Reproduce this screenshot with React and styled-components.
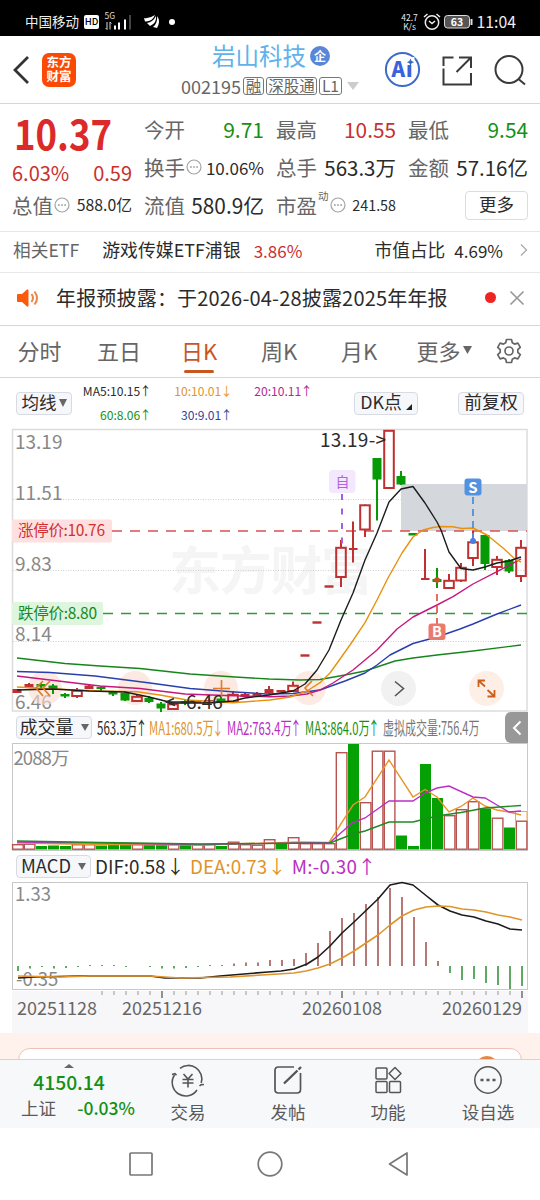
import React from 'react';
import styled, { createGlobalStyle } from 'styled-components';

const RED = '#c93030';
const GREEN = '#149114';
const ORANGE = '#e0942a';
const PURPLE = '#b92fc4';
const BLUE = '#2f459c';
const DARK = '#2b2b2b';

const GlobalStyle = createGlobalStyle`
  * { box-sizing: border-box; }
  body {
    margin: 0;
    background: #fff;
    color: ${DARK};
    font-family: "Noto Sans CJK SC", "Noto Sans", sans-serif;
    line-height: 1;
    white-space: nowrap;
  }
  svg { display: block; flex: none; overflow: visible; }
`;

const Screen = styled.div`
  width: 540px;
  height: 1200px;
  overflow: hidden;
  display: flex;
  flex-direction: column;
`;

const Text = styled.span`
  flex: none;
  font-size: ${p => p.$size || 18}px;
  color: ${p => p.$color || DARK};
  font-weight: ${p => p.$weight || 400};
  letter-spacing: ${p => p.$ls || 0}px;
  margin-left: ${p => p.$ml || 0}px;
`;

/* status bar */
const StatusBar = styled.div`
  height: 36px;
  flex: none;
  background: #000;
  display: flex;
  align-items: center;
  padding: 7px 24px 0 25px;
`;
const HdBox = styled.span`
  width: 15px;
  height: 14px;
  margin-left: 5px;
  border-radius: 2px;
  background: #fff;
  color: #000;
  font-size: 9.5px;
  font-weight: 500;
  display: flex;
  align-items: center;
  justify-content: center;
`;
const Spacer = styled.span`
  flex: 1;
`;
const Speed = styled.span`
  width: 18px;
  display: flex;
  flex-direction: column;
  align-items: center;
  gap: 1px;
  color: #e8e8e8;
  font-size: 8.5px;
  margin-right: 4px;
`;

/* header */
const Header = styled.div`
  height: 68px;
  flex: none;
  border-bottom: 1px solid #d6d6d6;
  display: flex;
  align-items: center;
  padding-left: 12px;
`;
const Logo = styled.div`
  width: 34px;
  height: 34px;
  margin-left: 12px;
  border-radius: 7px;
  background: #fb4a05;
  color: #fff;
  font-size: 12.5px;
  font-weight: 700;
  line-height: 14px;
  text-align: center;
  padding-top: 2px;
`;
const Titles = styled.div`
  width: 178px;
  height: 67px;
  margin: 0 25px 0 105px;
  display: flex;
  flex-direction: column;
`;
const TitleRow = styled.div`
  display: flex;
  align-items: center;
  height: 25px;
  margin-top: 7px;
  padding-left: 31px;
`;
const Badge = styled.span`
  width: 20px;
  height: 20px;
  margin-left: 4px;
  border-radius: 50%;
  background: #5a86d8;
  color: #fff;
  font-size: 12px;
  font-weight: 700;
  display: flex;
  align-items: center;
  justify-content: center;
`;
const CodeRow = styled.div`
  display: flex;
  align-items: center;
  height: 20px;
  margin-top: 8px;
`;
const Tag = styled.span`
  height: 18px;
  width: ${p => p.$w}px;
  margin-left: 2px;
  border: 1px solid #777;
  border-radius: 3px;
  color: #666;
  font-size: 15.5px;
  display: flex;
  align-items: center;
  justify-content: center;
  padding-bottom: 1px;
`;

/* quote */
const Quote = styled.div`
  height: 128px;
  flex: none;
  border-bottom: 1px solid #e6e6e6;
  display: grid;
  grid-template-columns: repeat(4, 120px);
  column-gap: 12px;
  padding: 6px 0 0 12px;
  align-content: start;
`;
const QuoteCol = styled.div`
  display: flex;
  flex-direction: column;
`;
const Cell = styled.div`
  height: ${p => p.$h || 38}px;
  display: flex;
  align-items: center;
  justify-content: space-between;
`;
const Group = styled.span`
  display: flex;
  align-items: center;
  gap: 1px;
`;
const Sup = styled.sup`
  font-size: 10.5px;
  color: #666;
  align-self: flex-start;
  margin-top: -4px;
`;
const Price = styled.div`
  height: 49px;
  display: flex;
  align-items: center;
  padding: 0 0 5px 2px;
  font-size: 42px;
  font-weight: 700;
  color: #dc2a2a;

  span {
    transform: scaleX(0.87);
    transform-origin: left;
  }
`;
const MoreButton = styled.button`
  width: 63px;
  height: 29px;
  margin: 5px 0 0 57px;
  padding: 0 0 3px;
  border: 1px solid #dcdcdc;
  border-radius: 4px;
  background: #fff;
  color: ${DARK};
  font: 400 17.5px "Noto Sans CJK SC", sans-serif;
  line-height: 1;
`;

const EtfRow = styled.div`
  height: 41px;
  flex: none;
  border-bottom: 1px solid #e8e8e8;
  display: flex;
  align-items: center;
  padding: 0 12px 4px 13px;
`;
const NoticeRow = styled.div`
  height: 53px;
  flex: none;
  border-bottom: 1px solid #d6d6d6;
  display: flex;
  align-items: center;
  padding: 0 15px 3px 16px;
`;
const Dot = styled.span`
  width: ${p => p.$s}px;
  height: ${p => p.$s}px;
  border-radius: 50%;
  background: ${p => p.$c};
`;

/* period tabs */
const Tabs = styled.div`
  height: 52px;
  flex: none;
  border-bottom: 1px solid #d6d6d6;
  display: flex;
`;
const Tab = styled.div`
  width: ${p => p.$w || 80}px;
  height: 51px;
  padding-bottom: ${p => (p.$icon ? 1 : 4)}px;
  position: relative;
  display: flex;
  align-items: center;
  justify-content: center;
  gap: 2px;
  font-size: 22px;
  color: ${p => (p.$active ? '#c8571f' : '#666')};

  &::after {
    content: '';
    display: ${p => (p.$active ? 'block' : 'none')};
    position: absolute;
    bottom: 4px;
    left: 25px;
    width: 30px;
    height: 3px;
    border-radius: 2px;
    background: #c8571f;
  }
`;

/* indicator bars */
const IndicatorBar = styled.div`
  height: ${p => p.$h}px;
  flex: none;
  padding: ${p => p.$pad || '0 12px 0 16px'};
  display: flex;
  align-items: center;
`;
const Pick = styled.div`
  width: ${p => p.$w}px;
  height: 23px;
  flex: none;
  padding-bottom: 3px;
  border: 1px solid #d9dbe2;
  border-radius: 4px;
  background: #f6f7fa;
  display: flex;
  align-items: center;
  justify-content: center;
  gap: ${p => p.$gap || 2}px;
  font-size: 17.8px;

  svg {
    position: relative;
    top: 1px;
  }
`;
const Legend = styled.div`
  width: 239px;
  display: grid;
  grid-template-columns: 78px 81px 80px;
  grid-template-rows: 24px 24px;
  align-items: center;
  justify-items: end;
  font-size: 12.1px;
`;
const LegendItem = styled.span`
  color: ${p => p.$c};
  display: flex;
  align-items: center;
`;
const Arrow = styled.span`
  width: 0.72em;
  display: inline-flex;
  justify-content: center;
  margin-left: ${p => p.$ml || 0}px;
`;
const SlimBox = styled.span`
  width: ${p => p.$w}px;
  flex: none;
  margin-left: ${p => p.$ml}px;
`;
const Slim = styled.span`
  display: inline-flex;
  align-items: center;
  font-size: 18px;
  color: ${p => p.$c};
  transform: translateY(-1px) scaleX(${p => p.$k});
  transform-origin: left;
`;
const Collapse = styled.div`
  width: 23px;
  height: 31px;
  border-radius: 6px 0 0 6px;
  background: #989898;
  display: flex;
  align-items: center;
  justify-content: center;
  margin-left: auto;
`;
const ChartBox = styled.div`
  flex: none;
  height: ${p => p.$h}px;
  padding-left: 12px;
`;

/* bottom */
const Promo = styled.div`
  height: 26px;
  flex: none;
  background: #fff2ed;
  padding: 15px 18px 0;
  overflow: hidden;
`;
const PromoCard = styled.div`
  height: 40px;
  border: 1px solid #eec2b9;
  border-radius: 12px;
  background: #fff;
  padding: 7px 22px 0 0;
  display: flex;
  justify-content: flex-end;
`;
const BottomBar = styled.div`
  height: 69px;
  flex: none;
  border-top: 1px solid #d2d4d6;
  background: #f6f8fa;
  display: flex;
`;
const IndexBox = styled.div`
  width: 138px;
  display: flex;
  flex-direction: column;
  align-items: center;
  padding-top: 4px;
`;
const IndexValue = styled.div`
  margin-top: 5px;
  font-size: 19.3px;
  font-weight: 500;
  color: ${GREEN};
`;
const IndexRow = styled.div`
  width: 138px;
  height: 20px;
  margin-top: 5px;
  padding: 0 3px 0 21px;
  display: flex;
  align-items: center;
  justify-content: space-between;
`;
const Action = styled.div`
  width: 100px;
  display: flex;
  flex-direction: column;
  align-items: center;
  padding-top: 4px;
  gap: 7px;
  font-size: 17.5px;
  color: #5a5a5a;
`;
const NavBar = styled.div`
  height: 72px;
  flex: none;
  display: flex;
  align-items: center;
  justify-content: center;
  gap: 103px;
  padding-right: 1px;
`;

const Info = () => (
  <svg width="16" height="16" viewBox="0 0 16 16" fill="none" stroke="#a3a3a3">
    <circle cx="8" cy="8" r="7" strokeWidth="1.2" />
    <path d="M4 8h1.8M7.1 8h1.8M10.2 8H12" strokeWidth="1.6" />
  </svg>
);
const Caret = ({ w = 8, h = 7, c = '#666' }) => (
  <svg width={w} height={h} viewBox="0 0 10 10" preserveAspectRatio="none">
    <path d="M0 0h10L5 10z" fill={c} />
  </svg>
);

const xAt = i => 17 + 12 * i;

// [kind, high, body top, body bottom, low]; h = hollow red, g = green
const candles = [
  ['r', 689, 689, 693, 693], ['r', 683, 684, 688, 688], ['g', 683, 684, 686.5, 689],
  ['g', 684, 685.5, 690, 694], ['g', 693, 694, 696.5, 698], ['h', 688, 690, 696, 698],
  ['r', 684, 685.5, 689, 689], ['g', 686, 687, 689, 691], ['g', 691, 692, 694.5, 696],
  ['g', 692, 693, 700.5, 701], ['h', 695, 696, 701, 702], ['g', 696, 698, 702, 703],
  ['g', 702, 703.5, 708.5, 712], ['h', 702, 703.5, 709, 710], ['g', 700, 701, 703.5, 705],
  ['r', 700, 700, 703, 703], ['r', 699, 700, 703, 703], ['g', 697, 698.5, 701, 703],
  ['h', 691, 694, 702, 703], ['r', 693, 694, 697, 697], ['r', 692, 693.5, 696.5, 697],
  ['r', 686, 689, 693, 694], ['r', 690, 690, 692.5, 692], ['h', 681.5, 685, 691, 692],
  ['d', 0, 655.5], ['d', 0, 622.5], ['d', 0, 586.5],
  ['h', 540, 547, 577, 587], ['x', 521.5, 549, 549, 562.5], ['h', 504, 504.5, 529.5, 537],
  ['g', 458, 458, 479.5, 520.5], ['h', 430, 430, 488, 488], ['g', 471, 476, 484.5, 485],
  ['g', 533, 533, 535.5, 535], ['x', 549, 579, 579, 579], ['g', 568, 579, 582, 588],
  ['h', 574, 580, 588, 589], ['h', 563, 567, 580.5, 582], ['h', 531, 541.5, 558, 566],
  ['g', 535, 535, 564, 570], ['h', 556, 559, 567, 575], ['g', 559, 560, 571.5, 573],
  ['h', 540, 547, 576, 582],
];

const maLines = [
  ['#16861a', '17,658 65,663.5 100,666 140,668.5 190,674 235,677 269,679 300,680 320,679.5 345,675 365,671 377,667 395,661 413,658 437,655 473,651 521,645'],
  ['#2a3fae', '17,671.5 50,672.5 95,676 150,683 190,688.5 235,692 267,694 293,693.5 320,690 345,681 365,673 377,665 390,655 413,643.5 437,637 460,629 473,624 497,614 521,605'],
  ['#c4187e', '17,676 50,680 100,686 140,688.5 160,691 185,694 225,695.5 270,696.7 290,696 307,694 320,690 333,683 353,670 377,650 397,629 413,617 437,605 453,596.7 473,584 497,571.7 521,559'],
  ['#e8920f', '17,687 53,689 100,691 137,691.7 160,695 187,700 233,702.7 270,700 290,697 307,691 320,682.7 330,673 350,645 365,622.7 377,600 388,578 402,553 413,537 423,530 433,527.5 440,526.5 453,526.7 462,528.5 473,528 487,535 503,548 515,559 521,562'],
  ['#1c1c1c', '17,690 53,689 89,691 125,692 149,697 173,703 209,703 233,701 245,698 269,695 281,693 293,691 305,684 317,670 329,650 341,620 353,593 365,560 377,533 389,502 401,489 413,486.5 425,503 437,522 441,530 449,552 461,568.5 473,570 485,567 497,563 509,561 521,557'],
];

const Candle = ({ x, d }) => {
  const [kind, hi, top, bottom, lo] = d;
  const c = kind === 'g' ? '#079a07' : '#c03030';
  if (kind === 'd') return <rect x={x - 4.5} y={top - 1.2} width="9" height="2.4" fill={c} />;
  if (kind === 'x') {
    return <path d={`M${x} ${hi}V${lo}M${x - 4} ${top}h8.5`} stroke={c} strokeWidth="2" fill="none" />;
  }
  if (kind === 'h') {
    return (
      <g stroke={c} strokeWidth="2" fill="none">
        <path d={`M${x} ${hi}V${top}M${x} ${bottom}V${lo}`} />
        <rect x={x - 4.8} y={top + 0.8} width="9.6" height={bottom - top - 0.8} />
      </g>
    );
  }
  return (
    <g fill={c}>
      <rect x={x - 1} y={hi} width="2" height={lo - hi} />
      <rect x={x - 4.5} y={top} width="9" height={bottom - top} />
    </g>
  );
};

const PriceChart = () => (
  <svg width="516" height="284" viewBox="12 428 516 284">
    <text x="169" y="590" fontSize="52" fontWeight="700" fill="#f5f5f5" textLength="204">东方财富</text>
    <rect x="12.5" y="429.5" width="514.5" height="281.5" fill="none" stroke="#dcdcdc" strokeWidth="1.5" />
    <path d="M13 499.5H527M13 570.5H527M13 641.5H527" stroke="#cfcfcf" strokeDasharray="1 1.5" />
    <g fontSize="19" fill="#888">
      <text x="15" y="449">13.19</text>
      <text x="15" y="500">11.51</text>
      <text x="15" y="571">9.83</text>
      <text x="15" y="641">8.14</text>
      <text x="15" y="708.5">6.46</text>
    </g>
    <rect x="401" y="484" width="126" height="47" fill="#d4d8dd" />
    <g fill="#fbdcd0" opacity="0.6">
      <circle cx="45" cy="688" r="17" />
      <circle cx="135" cy="688" r="17" />
      <circle cx="221" cy="688" r="17" />
      <circle cx="309" cy="688" r="17" />
    </g>
    <circle cx="398.5" cy="688.5" r="17.5" fill="#f1f1f1" />
    <circle cx="486.5" cy="688.5" r="17.5" fill="#feefe6" />
    <path d="M112 531H527" stroke="#dc5050" strokeWidth="1.4" strokeDasharray="10 8" />
    <path d="M103 613.5H527" stroke="#2f9a3c" strokeWidth="1.4" strokeDasharray="10 8" />
    <rect x="12" y="519.5" width="100" height="23" rx="2" fill="#fee0e0" />
    <rect x="12" y="602" width="91" height="23" rx="2" fill="#def5de" />
    <text x="18" y="536" fontSize="15.5" fill="#d03030" textLength="87">涨停价:10.76</text>
    <text x="18" y="619" fontSize="15.5" fill="#188a24" textLength="79">跌停价:8.80</text>

    {candles.map((d, i) => <Candle key={i} x={xAt(i)} d={d} />)}
    {maLines.map(([c, pts]) => (
      <polyline key={c} points={pts} fill="none" stroke={c} strokeWidth="1.4" strokeLinejoin="round" />
    ))}

    <path d="M342 494V548" stroke="#a062dc" strokeWidth="2" strokeDasharray="6 8.5" />
    <rect x="329" y="470" width="26.5" height="23" rx="4" fill="#f3e8fd" />
    <text x="342.5" y="486.8" fontSize="14" fill="#b065dc" textAnchor="middle">自</text>
    <path d="M473 497V540" stroke="#4f8fe0" strokeWidth="1.8" strokeDasharray="7 5" />
    <circle cx="473" cy="541" r="3" fill="#4a7fe0" />
    <rect x="464.5" y="478.5" width="17" height="17" rx="3" fill="#5292e0" />
    <text x="473" y="492.5" fontSize="15" fontWeight="700" fill="#fff" textAnchor="middle">S</text>
    <path d="M437 594V624" stroke="#e2604e" strokeWidth="1.8" strokeDasharray="7 5" />
    <circle cx="437" cy="580" r="2.8" fill="#c5521a" />
    <rect x="428.5" y="623.5" width="17" height="16.5" rx="3" fill="#ea7b6c" />
    <text x="437" y="637" fontSize="14.5" fontWeight="700" fill="#fff" textAnchor="middle">B</text>

    <text x="320" y="447" fontSize="19" fill={DARK} textLength="66">13.19-&gt;</text>
    <text x="186" y="708.5" fontSize="19" fill={DARK}>6.46</text>
    <path d="M174 698.5l-8 3.5 9 3.5M167 702h27" stroke={DARK} strokeWidth="1.4" fill="none" />

    <g fill="none" stroke="#e07a28" strokeWidth="1.6">
      <path d="M43 681l-7 7 7 8M50 681l-7 7 7 8" />
      <path d="M221.5 680V697M213 688.5H230" />
      <path d="M312 681l-7 7 8 8" />
    </g>
    <path d="M395 681.5l8.5 7-8.5 7.5" fill="none" stroke="#555" strokeWidth="1.6" />
    <path d="M478.5 687v-6.5h6.5M479 681l6 5.5M487.5 696.5h7v-6.5M494 696l-6.500-6" fill="none" stroke="#cc5f1c" strokeWidth="1.8" />
  </svg>
);

const volumes = [
  ['r', 844.5], ['r', 844], ['g', 846], ['g', 845.5], ['g', 846], ['r', 844.5], ['r', 844.5],
  ['g', 845.5], ['g', 845], ['g', 845], ['r', 844.5], ['g', 845], ['g', 845], ['r', 844.5],
  ['g', 845], ['r', 844.5], ['r', 844.5], ['g', 846], ['r', 842], ['r', 844.5], ['r', 845],
  ['r', 839.5], ['g', 843], ['r', 837.5], ['r', 843.5], ['r', 843.5], ['r', 843.5],
  ['r', 752.5], ['g', 744], ['r', 802.5], ['r', 751], ['r', 751], ['g', 835.5], ['g', 846],
  ['g', 764], ['g', 798], ['r', 815.5], ['r', 809.5], ['r', 801.5], ['g', 808.5],
  ['r', 818], ['g', 827.5], ['r', 821],
];

const VolumeChart = () => (
  <svg width="516" height="108" viewBox="12 743 516 108">
    <rect x="12.5" y="743.5" width="515" height="107" fill="none" stroke="#c8c8c8" />
    {volumes.map(([k, top], i) => (k === 'g'
      ? <rect key={i} x={xAt(i) - 5} y={top} width="11" height={849.5 - top} fill="#04a004" />
      : <rect key={i} x={Math.max(xAt(i) - 4.7, 12.6)} y={top + 0.2} width="10.6" height={849 - top} fill="#fff" stroke="#b85450" strokeWidth="1.4" />
    ))}
    <path d="M515.500 821V811.500H527V821" fill="none" stroke="#eda45c" />
    <text x="13.500" y="765" fontSize="18.5" fill="#888" textLength="56">2088万</text>
    <g fill="none" strokeWidth="1.4">
      <polyline stroke="#e8952a" points="17,843 100,844.5 200,845 300,842 329,842.5 353,805 365,797 389,760 413,797 425,789.5 437,797 449,812 461,806.5 473,798 485,806 497,810 509,812 521,815" />
      <polyline stroke={PURPLE} points="17,842 100,843 200,844.5 330,842.5 352,823 365,818 389,801 413,801 425,793 437,788 449,786 473,797 485,798 497,805 509,812 521,811" />
      <polyline stroke="#1f8a22" points="17,841 100,842.500 200,844 330,843 353,834 365,831 389,822 413,822 437,816 461,812.5 485,808 521,805.5" />
    </g>
  </svg>
);

const macd = [
  971, 968.5, 967, 968.5, 968, 967, 965, 965, 965, 967, 966, 967, 968.5, 968.5, 968, 967, 965, 965,
  963.5, 962.5, 962.5, 960, 960, 959, 953, 943, 931, 918, 913, 904, 897, 888, 897, 917, 942,
  961, 973, 980, 979, 983, 985, 989, 986,
];

const MacdChart = () => (
  <svg width="516" height="109" viewBox="12 882 516 109">
    <rect x="12.5" y="882.5" width="515" height="107" fill="none" stroke="#c8c8c8" />
    {macd.map((y, i) => (
      <path key={i} d={`M${18 + 12 * i} 966V${y}`} stroke={y > 966 ? '#449a48' : '#a8615e'} strokeWidth="1.7" />
    ))}
    <g fontSize="18.5" fill="#888">
      <text x="15" y="900.5">1.33</text>
      <text x="16" y="985.5">-0.35</text>
    </g>
    <g fill="none" strokeWidth="1.6" strokeLinejoin="round">
      <polyline stroke="#1c1c1c" points="18,978 35,977 80,976 150,976 165,978 200,978 220,976 268,972 281,971 294,969 307,964 318,957 330,946 342,933 354,922 366,910.5 378,899 390,885 402,882.5 413,885 426,895.5 438,905 450,911 462,915 474,917 486,921 498,924 510,929 522,930" />
      <polyline stroke={ORANGE} points="18,976 60,977 90,976 150,976 180,978 230,977 270,974.5 294,973 306,971 318,968 330,964 342,958 354,951 366,943 378,935 390,925 402,916 414,910 426,907 438,906 450,906.5 462,909 474,910 486,912 498,915 510,917 522,920" />
    </g>
  </svg>
);

const DateAxis = () => (
  <svg width="516" height="42" viewBox="12 991 516 42">
    <rect x="12" y="991" width="516" height="42" fill="#f7f7fa" />
    {Array.from({ length: 36 }, (_, i) => 102 + 12 * i).map(x => {
      const major = [162, 342, 522].includes(x);
      return <path key={x} d={`M${x} 991V${major ? 998 : 995}`} stroke={major ? '#777' : '#bbb'} strokeWidth="1.6" />;
    })}
    <g fontSize="18" fill="#666">
      <text x="17" y="1015">20251128</text>
      <text x="122" y="1015">20251216</text>
      <text x="302" y="1015">20260108</text>
      <text x="442" y="1015">20260129</text>
    </g>
  </svg>
);

const App = () => {
  return (
    <Screen>
      <GlobalStyle />
      <StatusBar>
        <Text $size={13.5} $color="#eee">中国移动</Text>
        <HdBox>HD</HdBox>
        <svg width="38" height="20" viewBox="0 0 38 20">
          <text x="5.500" y="7" fontSize="8.500" fill="#ddd">5G</text>
          <path d="M8 10v7.500l-1.500-1.500M11 17.500V10l1.500 1.500" stroke="#ddd" fill="none" />
          <path d="M16 17.500v-4M20 17.500v-7M26 17.500v-10" stroke="#fff" strokeWidth="2" />
          <path d="M31 17.500V3" stroke="#444" strokeWidth="2" />
        </svg>
        <svg width="44" height="16" viewBox="0 0 44 16" fill="#fff">
          <path d="M7 4q5 1 11-3-3 7-10 6.500zM10 9q6-1 9-7 1 7-6 10-1-1-3-3zM16 13q5-4 4-11 4 5 0 12z" />
          <circle cx="35" cy="8" r="3" />
        </svg>
        <Spacer />
        <Speed><span>42.7</span><span>K/s</span></Speed>
        <svg width="18" height="18" viewBox="0 0 18 18" fill="none" stroke="#eee" strokeWidth="1.5">
          <circle cx="9" cy="9.500" r="6.700" />
          <path d="M1 4l3.500-3M17 4l-3.500-3M6 8l3 2.500L12 8" />
        </svg>
        <svg width="33" height="16" viewBox="0 0 33 16">
          <rect x="3.500" y="1.500" width="25" height="12.500" rx="3" fill="#555" stroke="#ddd" />
          <path d="M30.500 5v6" stroke="#ddd" strokeWidth="2" />
          <text x="16" y="11.800" fontSize="10.500" fontWeight="700" fill="#fff" textAnchor="middle">63</text>
        </svg>
        <Text $size={15.8} $color="#eee" $ml={3}>11:04</Text>
      </StatusBar>

      <Header>
        <svg width="18" height="30" viewBox="0 0 18 30" fill="none" stroke="#333" strokeWidth="2.800">
          <path d="M16 2L3 15l13 13" />
        </svg>
        <Logo>东方<br />财富</Logo>
        <Titles>
          <TitleRow>
            <Text $size={23.5} $color="#5fb2ea">岩山科技</Text>
            <Badge>企</Badge>
          </TitleRow>
          <CodeRow>
            <Text $size={18} $color="#666">002195</Text>
            <Tag $w={21}>融</Tag>
            <Tag $w={51}>深股通</Tag>
            <Tag $w={23}>L1</Tag>
            <Text $ml={5}><Caret w={12} h={8} c="#ccc" /></Text>
          </CodeRow>
        </Titles>
        <svg width="37" height="37" viewBox="0 0 37 37">
          <circle cx="18.500" cy="18.500" r="16.600" fill="#fff" stroke="#3c6cc8" strokeWidth="2" />
          <text x="7.500" y="26" fontSize="20.500" fontWeight="900" fill="#3a62dc" textLength="21">Ai</text>
          <path d="M22.500 6h8v8h-8z" fill="#fff" />
          <path d="M26.500 7.500l1.100 2.600 2.600 1.100-2.600 1.100-1.100 2.600-1.100-2.600-2.600-1.100 2.600-1.100z" fill="#3466c4" />
        </svg>
        <svg width="52" height="36" viewBox="0 0 52 36" fill="none" stroke="#3a3a3a" strokeWidth="2">
          <path d="M32.500 5.500H22.500V14M22.500 16.500V32.500H50V21M38 5.500H50V16M35.500 20L50 5.500" />
        </svg>
        <svg width="56" height="36" viewBox="0 0 56 36" fill="none" stroke="#3a3a3a" strokeWidth="2">
          <circle cx="36" cy="17.500" r="13.500" />
          <path d="M45.500 27l6.500 5.500" />
        </svg>
      </Header>

      <Quote>
        <QuoteCol>
          <Price><span>10.37</span></Price>
          <Cell $h={27}>
            <Text $size={20} $color={RED}>6.03%</Text>
            <Text $size={20} $color={RED}>0.59</Text>
          </Cell>
          <Cell>
            <Group><Text $size={20.5} $color="#666">总值</Text><Info /></Group>
            <Text $size={15.8}>588.0亿</Text>
          </Cell>
        </QuoteCol>
        <QuoteCol>
          <Cell><Text $size={20.5} $color="#666">今开</Text><Text $size={21} $color={GREEN}>9.71</Text></Cell>
          <Cell>
            <Group><Text $size={20.5} $color="#666">换手</Text><Info /></Group>
            <Text $size={17}>10.06%</Text>
          </Cell>
          <Cell><Text $size={20.5} $color="#666">流值</Text><Text $size={20.8}>580.9亿</Text></Cell>
        </QuoteCol>
        <QuoteCol>
          <Cell><Text $size={20.5} $color="#666">最高</Text><Text $size={20.8} $color={RED}>10.55</Text></Cell>
          <Cell><Text $size={20.5} $color="#666">总手</Text><Text $size={20.5}>563.3万</Text></Cell>
          <Cell>
            <Group><Text $size={20.5} $color="#666">市盈</Text><Sup>动</Sup><Info /></Group>
            <Text $size={14.3}>241.58</Text>
          </Cell>
        </QuoteCol>
        <QuoteCol>
          <Cell><Text $size={20.5} $color="#666">最低</Text><Text $size={20.8} $color={GREEN}>9.54</Text></Cell>
          <Cell><Text $size={20.5} $color="#666">金额</Text><Text $size={20.5}>57.16亿</Text></Cell>
          <MoreButton>更多</MoreButton>
        </QuoteCol>
      </Quote>

      <EtfRow>
        <Text $color="#666" $size={17.7}>相关ETF</Text>
        <Text $ml={23} $size={17.9}>游戏传媒ETF浦银</Text>
        <Text $ml={13} $size={17} $color={RED}>3.86%</Text>
        <Spacer />
        <Text $size={17.7}>市值占比</Text>
        <Text $ml={9} $size={17}>4.69%</Text>
        <Text $ml={17}>
          <svg width="8" height="14" viewBox="0 0 8 14" fill="none" stroke="#aaa" strokeWidth="1.300">
            <path d="M1 1.500L6.500 7 1 12.500" />
          </svg>
        </Text>
      </EtfRow>
      <NoticeRow>
        <svg width="24" height="20" viewBox="0 0 24 20">
          <path d="M1 7q0-1 1-1h4l5-4.500q1.500-.5 1.500 1v15q0 1.500-1.500 1L6 14H2q-1 0-1-1z" fill="#fb5a0b" />
          <path d="M15.500 6q3 4 0 8M18.500 3.500q5 6.500 0 13" stroke="#e88748" strokeWidth="2" fill="none" />
        </svg>
        <Text $size={20} $ls={0.18} $ml={16}>年报预披露：于2026-04-28披露2025年年报</Text>
        <Spacer />
        <Dot $s={11} $c="#ee2524" />
        <Text $ml={13}>
          <svg width="16" height="16" viewBox="0 0 16 16" stroke="#999" strokeWidth="1.700">
            <path d="M1.500 1.500l13 13M14.500 1.500l-13 13" />
          </svg>
        </Text>
      </NoticeRow>

      <Tabs>
        <Tab $w={79}>分时</Tab>
        <Tab>五日</Tab>
        <Tab $active>日K</Tab>
        <Tab>周K</Tab>
        <Tab>月K</Tab>
        <Tab $w={90}>更多<Caret w={9} h={8} /></Tab>
        <Tab $w={40} $icon>
          <svg width="26" height="26" viewBox="0 0 26 26" fill="none" stroke="#666" strokeWidth="1.700" strokeLinejoin="round">
            <circle cx="13" cy="13" r="4" />
            <path d="M10.500 1.500h5l.8 3.300 2.200 1.300 3.400-1 2.400 4.200-2.500 2.400v2.600l2.500 2.400-2.400 4.200-3.400-1-2.200 1.300-.8 3.300h-5l-.8-3.300-2.200-1.300-3.400 1-2.400-4.200 2.500-2.400v-2.600L1.700 9.300l2.400-4.200 3.400 1 2.200-1.300z" />
          </svg>
        </Tab>
      </Tabs>

      <IndicatorBar $h={50} $pad="0 16px 0 16px">
        <Pick $w={56}><Text $size={17.5}>均线</Text><Caret w={8} h={8} /></Pick>
        <Legend>
          <LegendItem $c={DARK}>MA5:10.15<Arrow $ml={1}>↑</Arrow></LegendItem>
          <LegendItem $c={ORANGE}>10:10.01<Arrow $ml={1}>↓</Arrow></LegendItem>
          <LegendItem $c="#b5268f">20:10.11<Arrow $ml={1}>↑</Arrow></LegendItem>
          <LegendItem $c={GREEN}>60:8.06<Arrow $ml={1}>↑</Arrow></LegendItem>
          <LegendItem $c={BLUE}>30:9.01<Arrow $ml={1}>↑</Arrow></LegendItem>
        </Legend>
        <Text $ml={43}>
          <Pick $w={64} $gap={4}>
            DK点
            <svg width="6" height="14" viewBox="0 0 6 14"><path d="M6 8v6H0z" fill="#222" /></svg>
          </Pick>
        </Text>
        <Spacer />
        <Pick $w={66}>前复权</Pick>
      </IndicatorBar>
      <ChartBox $h={284}><PriceChart /></ChartBox>

      <IndicatorBar $h={31}>
        <Pick $w={76} $gap={7}><Text $size={18}>成交量</Text><Caret w={8} h={7} /></Pick>
        <SlimBox $w={52} $ml={5}><Slim $c={DARK} $k={0.64}>563.3万<Arrow>↑</Arrow></Slim></SlimBox>
        <SlimBox $w={78} $ml={0}><Slim $c={ORANGE} $k={0.625}>MA1:680.5万<Arrow>↓</Arrow></Slim></SlimBox>
        <SlimBox $w={78} $ml={0}><Slim $c={PURPLE} $k={0.625}>MA2:763.4万<Arrow>↑</Arrow></Slim></SlimBox>
        <SlimBox $w={78} $ml={0}><Slim $c={GREEN} $k={0.625}>MA3:864.0万<Arrow>↑</Arrow></Slim></SlimBox>
        <SlimBox $w={100} $ml={0}><Slim $c="#777" $k={0.61}>虚拟成交量:756.4万</Slim></SlimBox>
        <Collapse>
          <svg width="10" height="16" viewBox="0 0 10 16" fill="none" stroke="#fff" strokeWidth="2">
            <path d="M8.500 1.500L2 8l6.500 6.500" />
          </svg>
        </Collapse>
      </IndicatorBar>
      <ChartBox $h={108}><VolumeChart /></ChartBox>

      <IndicatorBar $h={31}>
        <Pick $w={75} $gap={7}><Text $size={18.3}>MACD</Text><Caret w={8} h={7} /></Pick>
        <Text $size={18.8} $ml={4}>DIF:0.58<Arrow $ml={3}>↓</Arrow></Text>
        <Text $size={18.8} $ml={8} $color={ORANGE}>DEA:0.73<Arrow $ml={3}>↓</Arrow></Text>
        <Text $size={18.8} $ml={8} $ls={0.3} $color={PURPLE}>M:-0.30<Arrow $ml={3}>↑</Arrow></Text>
      </IndicatorBar>
      <ChartBox $h={109}><MacdChart /></ChartBox>
      <ChartBox $h={42}><DateAxis /></ChartBox>

      <Promo>
        <PromoCard><Dot $s={24} $c="#e58545" /></PromoCard>
      </Promo>
      <BottomBar>
        <IndexBox>
          <svg width="10" height="4" viewBox="0 0 10 4"><path d="M0 4l5-4 5 4z" fill="#666" /></svg>
          <IndexValue>4150.14</IndexValue>
          <IndexRow>
            <Text $size={17.5} $color="#5a5a5a">上证</Text>
            <Text $size={17.5} $color={GREEN} $weight={500}>-0.03%</Text>
          </IndexRow>
        </IndexBox>
        <Action>
          <svg width="34" height="32" viewBox="0 0 34 32" fill="none" stroke="#555" strokeWidth="1.600">
            <path d="M9 4.300A13.500 13.500 0 0 1 30.200 19M26 26A13.500 13.500 0 0 1 3.500 11" />
            <path d="M1 10.500l3-.8 1.500 1.500M33 20.500l-3 .3-1.500 1.200M12.500 10l4.500 5 4.500-5M17 15V23.500M11.500 15.500h11M11.500 19h11" />
          </svg>
          交易
        </Action>
        <Action>
          <svg width="32" height="32" viewBox="0 0 32 32" fill="none" stroke="#555" strokeWidth="1.700">
            <path d="M22 3H6.500Q3 3 3 6.500v19Q3 29 6.500 29h18.500q3.500 0 3.500-3.500V9" />
            <path d="M12 19.500L25.500 6.500M26.500 5.500L29 3" strokeWidth="2.400" />
          </svg>
          发帖
        </Action>
        <Action>
          <svg width="32" height="32" viewBox="0 0 32 32" fill="none" stroke="#555" strokeWidth="1.500" strokeLinejoin="round">
            <rect x="4" y="4" width="11" height="11" rx="1" />
            <rect x="4" y="17.500" width="11" height="11" rx="1" />
            <rect x="17.500" y="17.500" width="11" height="11" rx="1" />
            <path d="M23 3.500l6 6-6 6-6-6z" />
          </svg>
          功能
        </Action>
        <Action>
          <svg width="32" height="32" viewBox="0 0 32 32" fill="none" stroke="#555" strokeWidth="1.500">
            <circle cx="16" cy="16" r="13.200" />
            <path d="M8.500 16h3M14.500 16h3M20.500 16h3" strokeWidth="2.600" />
          </svg>
          设自选
        </Action>
      </BottomBar>
      <NavBar>
        <svg width="26" height="26" viewBox="0 0 26 26" fill="none" stroke="#777" strokeWidth="1.700">
          <rect x="2" y="2" width="22" height="22" rx="1" />
        </svg>
        <svg width="26" height="26" viewBox="0 0 26 26" fill="none" stroke="#777" strokeWidth="1.700">
          <circle cx="13" cy="13" r="11.800" />
        </svg>
        <svg width="26" height="26" viewBox="0 0 26 26" fill="none" stroke="#777" strokeWidth="1.700" strokeLinejoin="round">
          <path d="M21 2v22L3.500 13z" />
        </svg>
      </NavBar>
    </Screen>
  );
};

export default App;
